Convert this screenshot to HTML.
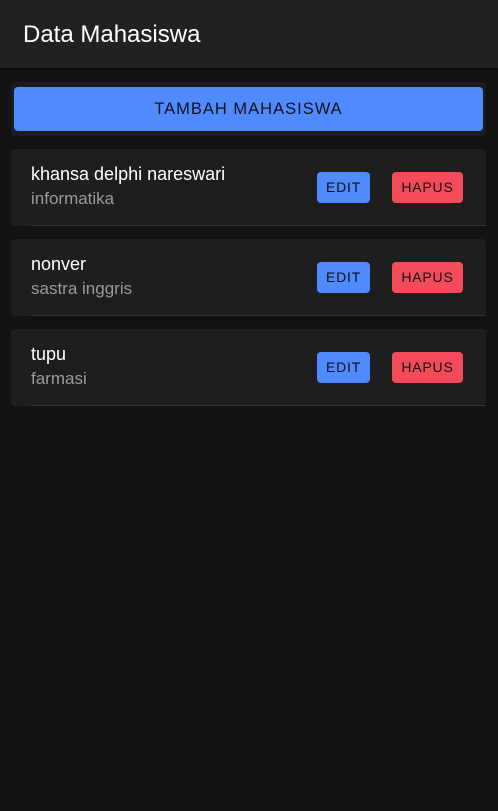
<!DOCTYPE html>
<html><head><style>
body{margin:0;width:498px;height:811px;background:#121212;font-family:"Liberation Sans",sans-serif;position:relative;overflow:hidden}
.hdr{position:absolute;left:0;top:0;width:498px;height:68px;background:#212121;box-shadow:0 2px 4px rgba(0,0,0,.5)}
.hdr span{position:absolute;left:23px;top:21px;font-size:24px;color:#fff}
.wrap{position:absolute;left:11px;top:82px;width:475px;height:54px;background:#1c1c1c;border-radius:4px}
.add{position:absolute;left:3px;top:5px;width:469px;height:44px;background:#4f8bff;border-radius:4px;color:#111;font-size:16.5px;letter-spacing:1px;text-align:center;line-height:45px}
.card{position:absolute;left:11px;width:475px;height:77px;background:#1e1e1e;border-radius:4px}
.card:after{content:"";position:absolute;left:20px;right:0;bottom:0;height:1px;background:#333}
.n{position:absolute;left:20px;top:15px;font-size:18px;color:#fff}
.s{position:absolute;left:20px;top:40px;font-size:17px;color:#9a9a9a}
.b{position:absolute;top:23px;height:31px;line-height:31px;border-radius:4px;font-size:14px;letter-spacing:.8px;color:#111;text-align:center}
.e{left:306px;width:53px;background:#4f8bff}
.h{left:381px;width:71px;background:#f44b5b}
</style></head><body>
<div class="hdr"><span>Data Mahasiswa</span></div>
<div class="wrap"><div class="add">TAMBAH MAHASISWA</div></div>
<div class="card" style="top:149px"><div class="n">khansa delphi nareswari</div><div class="s">informatika</div><div class="b e">EDIT</div><div class="b h">HAPUS</div></div>
<div class="card" style="top:239px"><div class="n">nonver</div><div class="s">sastra inggris</div><div class="b e">EDIT</div><div class="b h">HAPUS</div></div>
<div class="card" style="top:329px"><div class="n">tupu</div><div class="s">farmasi</div><div class="b e">EDIT</div><div class="b h">HAPUS</div></div>
</body></html>
